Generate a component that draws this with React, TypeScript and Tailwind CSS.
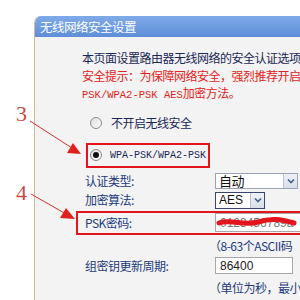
import React from 'react';

const cjk = "font-['Noto_Sans_CJK_SC','Noto_Sans',sans-serif]";
const mono = "font-['Liberation_Mono',monospace]";

const Radio = ({ checked }: { checked?: boolean }) => (
  <span className="w-[12px] h-[12px] shrink-0 rounded-full border border-[#8c8c8c] bg-gradient-to-br from-[#dcdcdc] to-white flex items-center justify-center">
    {checked && <span className="w-[6px] h-[6px] rounded-full bg-[#111]" />}
  </span>
);

const Chevron = () => (
  <span className="w-[14px] h-full shrink-0 bg-gradient-to-b from-[#eef1f7] to-[#d9dfea] border-l border-[#b9c2d4] flex items-center justify-center">
    <svg width="8" height="6" viewBox="0 0 8 6">
      <path d="M1 1.5 L4 4.5 L7 1.5" stroke="#4a5d86" strokeWidth="1.6" fill="none" />
    </svg>
  </span>
);

const Label = ({ children }: { children: React.ReactNode }) => (
  <span className="w-[130px] shrink-0 text-[#233b7c]">{children}</span>
);

const App = () => {
  return (
    <div className={`relative w-[300px] h-[300px] overflow-hidden bg-white text-[12px] tracking-[-0.5px] ${cjk}`}>
      <div className="pl-[34px] pt-[16px]">
        <div className="w-[290px] h-[284px] bg-[#f3f3f3] border-l border-[#d6b58c] rounded-tl-[7px] overflow-hidden">
          {/* Header */}
          <div className="h-[21px] bg-gradient-to-b from-[#80abea] to-[#5e8ed8] text-white text-[12.5px] leading-[21px] pl-[5px]">
            无线网络安全设置
          </div>

          <div className="pl-[47px] pt-[12px] whitespace-nowrap">
            <div className="h-[18px] leading-[18px] text-[#1b2756]">本页面设置路由器无线网络的安全认证选项</div>
            <div className="h-[18px] leading-[18px] text-[#e0231c]">安全提示：为保障网络安全，强烈推荐开启</div>
            <div className="h-[16px] leading-[16px] text-[#e0231c]">
              <span className={`${mono} text-[10.5px] tracking-normal`}>PSK/WPA2-PSK AES</span>加密方法。
            </div>

            {/* radios */}
            <div className="mt-[13px] h-[18px] pl-[8px] flex items-center gap-[9px] text-[#1b2756]">
              <Radio />
              <span>不开启无线安全</span>
            </div>
            <div className="mt-[14px] h-[18px] pl-[8px] flex items-center gap-[8px] text-[#1b2756]">
              <Radio checked />
              <span className={`${mono} text-[10px] tracking-normal`}>WPA-PSK/WPA2-PSK</span>
            </div>

            {/* form rows */}
            <div className="mt-[8px] h-[18px] pl-[3px] flex items-center">
              <Label>认证类型:</Label>
              <div className="w-[83px] h-[16px] bg-white border border-[#9aa3b5] flex items-center">
                <span className="flex-1 pl-[3px] text-[#111] text-[13px] leading-[14px]">自动</span>
                <Chevron />
              </div>
            </div>
            <div className="mt-[1px] h-[18px] pl-[3px] flex items-center">
              <Label>加密算法:</Label>
              <div className="w-[50px] h-[17px] bg-white border border-[#3a4670] flex items-center">
                <span className="flex-1 pl-[3px] text-[#111] text-[12px] tracking-normal font-['Liberation_Sans',sans-serif]">AES</span>
                <Chevron />
              </div>
            </div>
            <div className="mt-[4px] h-[19px] pl-[3px] flex items-center">
              <Label>PSK密码:</Label>
              <div className="relative w-[100px] h-[19px] bg-white border border-[#a7a7a7] flex items-center">
                <span className="pl-[4px] text-[#777] text-[12px] tracking-normal font-['Liberation_Sans',sans-serif]">0123456789a</span>
              </div>
            </div>
            <div className="mt-[5px] h-[18px] pl-[127px] leading-[18px] text-[#233b7c]">
              （8-63个ASCII码
            </div>
            <div className="mt-[2px] h-[17px] pl-[3px] flex items-center">
              <Label>组密钥更新周期:</Label>
              <div className="w-[78px] h-[17px] bg-white border border-[#a7a7a7] flex items-center">
                <span className="pl-[4px] text-[#222] text-[12px] tracking-normal font-['Liberation_Sans',sans-serif]">86400</span>
              </div>
            </div>
            <div className="mt-[5px] h-[18px] pl-[127px] leading-[18px] text-[#233b7c]">
              （单位为秒，最小
            </div>
          </div>
        </div>
      </div>

      {/* red highlight boxes */}
      <div className="absolute left-[86px] top-[143px] w-[124px] h-[25px] border-2 border-[#e3141c]" />
      <div className="absolute left-[76px] top-[211px] w-[240px] h-[24px] border-2 border-[#e3141c]" />

      {/* annotations */}
      <span className="absolute left-[16px] top-[103px] text-[22px] leading-[22px] text-[#c94a45] font-['Liberation_Serif',serif]">3</span>
      <span className="absolute left-[16px] top-[182px] text-[22px] leading-[22px] text-[#c94a45] font-['Liberation_Serif',serif]">4</span>
      <svg className="absolute left-0 top-0" width="300" height="300" viewBox="0 0 300 300">
        <line x1="30" y1="121" x2="72" y2="148" stroke="#d0302a" strokeWidth="1" />
        <polygon points="81,154 67,153 73,143" fill="#e0201c" />
        <line x1="31" y1="194" x2="66" y2="214" stroke="#d0302a" strokeWidth="1" />
        <polygon points="75,219 60,218 66,208" fill="#e0201c" />
        <path d="M219 223 C 230 219, 245 226, 258 222 S 280 219, 294 223" stroke="#e3141c" strokeWidth="5" strokeLinecap="round" fill="none" />
      </svg>
    </div>
  );
};

export default App;
